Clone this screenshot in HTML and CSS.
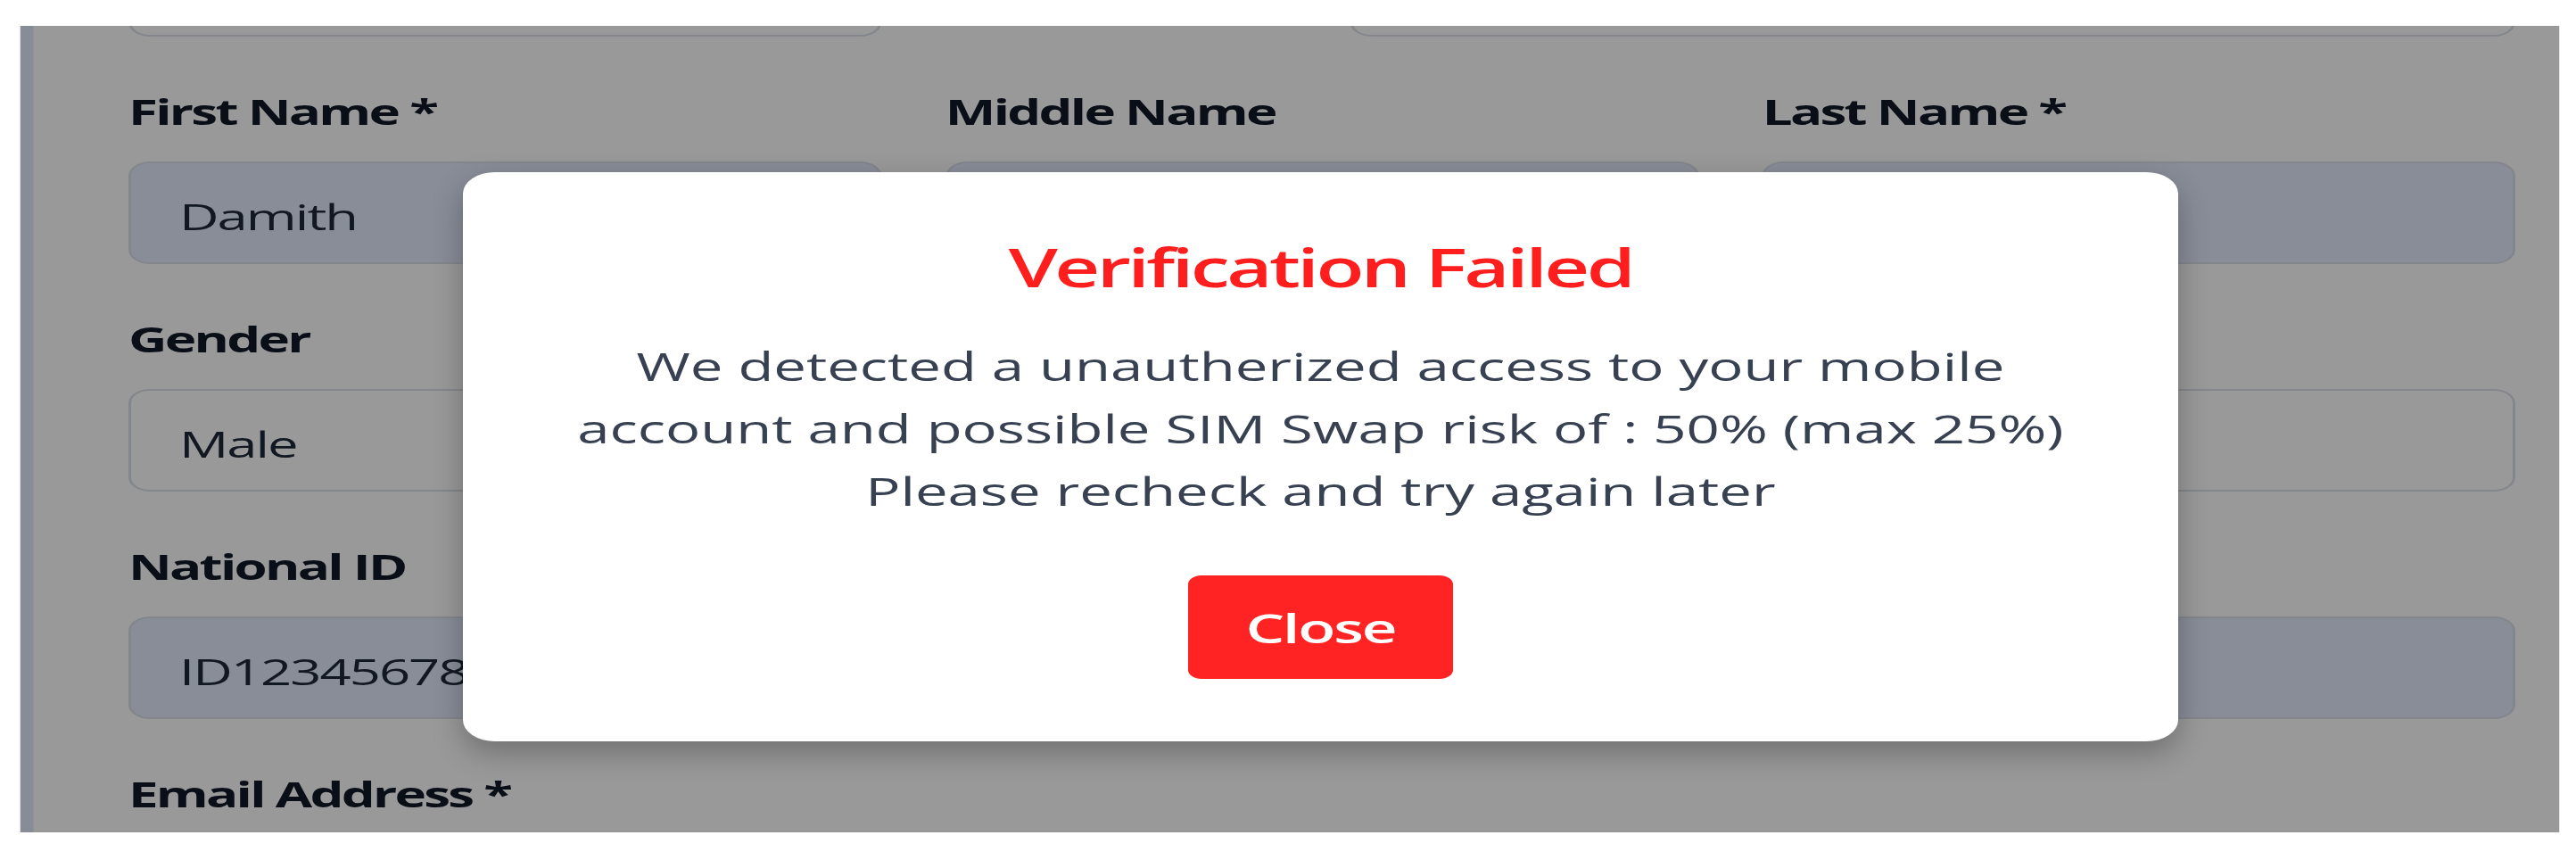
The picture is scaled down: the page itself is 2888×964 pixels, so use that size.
FILE: index.html
```html
<!DOCTYPE html>
<html lang="en">
<head>
<meta charset="utf-8">
<title>Verification Failed</title>
<link rel="stylesheet" href="styles.css">
</head>
<body>
<div class="stage">
  <div class="shot">
    <main class="page">
      <form class="form">
        <div class="field"><span class="label">&nbsp;</span><div class="input"></div></div>
        <div class="field field-wide"><span class="label">&nbsp;</span><div class="input"></div></div>

        <div class="field"><span class="label">First Name *</span><div class="input disabled">Damith</div></div>
        <div class="field"><span class="label">Middle Name</span><div class="input disabled"></div></div>
        <div class="field"><span class="label">Last Name *</span><div class="input disabled"></div></div>

        <div class="field"><span class="label">Gender</span><div class="input">Male</div></div>
        <div class="field"><span class="label">&nbsp;</span><div class="input"></div></div>
        <div class="field"><span class="label">&nbsp;</span><div class="input"></div></div>

        <div class="field"><span class="label">National ID</span><div class="input disabled">ID12345678</div></div>
        <div class="field"><span class="label">&nbsp;</span><div class="input disabled"></div></div>
        <div class="field"><span class="label">&nbsp;</span><div class="input disabled"></div></div>

        <div class="field"><span class="label">Email Address *</span><div class="input"></div></div>
      </form>
    </main>
    <div class="overlay">
      <div class="modal" role="dialog" aria-labelledby="modal-title">
        <h2 class="modal-title" id="modal-title">Verification Failed</h2>
        <p class="modal-text">We detected a unautherized access to your mobile<br>account and possible SIM Swap risk of : 50% (max 25%)<br>Please recheck and try again later</p>
        <button class="btn-close" type="button">Close</button>
      </div>
    </div>
  </div>
</div>
</body>
</html>
```

FILE: styles.css
```css
* { box-sizing: border-box; }

html, body {
  margin: 0;
  padding: 0;
  background: #ffffff;
  overflow: hidden;
}

body {
  width: 2888px;
  height: 964px;
  font-family: "Open Sans", "Noto Sans", "DejaVu Sans", sans-serif;
}

.stage {
  width: 1925.33px;
  height: 964px;
  padding: 29px 0 0 14.67px;
  transform: scaleX(1.5);
  transform-origin: 0 0;
}

.shot {
  position: relative;
  width: 1898px;
  height: 904px;
  overflow: hidden;
  background: #ffffff;
}

.page {
  display: flow-root;
  height: 100%;
  border-left: 10px solid #e3e9fb;
  padding: 0 32.2px 0 71.3px;
}

.form {
  display: grid;
  grid-template-columns: repeat(3, 563.3px);
  column-gap: 47.3px;
  row-gap: 59.5px;
  margin-top: -183.5px;
}

.field-wide {
  grid-column: span 2;
  padding-left: 302.7px;
}

.label {
  display: block;
  height: 48px;
  margin-bottom: 32.5px;
  font-size: 40px;
  line-height: 48px;
  font-weight: 700;
  letter-spacing: -1.8px;
  color: #111827;
  white-space: nowrap;
}

.input {
  display: flex;
  align-items: center;
  height: 115px;
  padding: 6px 0 0 36px;
  border: 2px solid #dbe1ea;
  border-radius: 16px;
  background: #ffffff;
  font-size: 41px;
  letter-spacing: -1.3px;
  color: #1f2937;
  white-space: nowrap;
}

.input.disabled {
  background: #e5ebfd;
}

.overlay {
  position: absolute;
  inset: 0;
  display: flex;
  align-items: center;
  justify-content: center;
  padding: 62px 0 0 46.6px;
  background: rgba(0, 0, 0, 0.4);
}

.modal {
  display: flex;
  flex-direction: column;
  align-items: center;
  width: 1282px;
  height: 638px;
  padding: 70.7px 40px 69px;
  border-radius: 24px;
  background: #ffffff;
  box-shadow: 0 12px 28px rgba(0, 0, 0, 0.28);
  text-align: center;
}

.modal-title {
  margin: 0;
  font-size: 59px;
  line-height: 70.8px;
  font-weight: 600;
  letter-spacing: -2.4px;
  color: #ff1e1e;
}

.modal-text {
  margin: 42px 0 0;
  font-size: 43.5px;
  line-height: 70px;
  color: #374151;
}

.btn-close {
  margin-top: 59px;
  width: 198.7px;
  height: 116px;
  border: 0;
  border-radius: 10px;
  background: #ff2323;
  color: #ffffff;
  font-family: "Open Sans", "Noto Sans", sans-serif;
  font-size: 46px;
  font-weight: 600;
  letter-spacing: -1.4px;
  line-height: 1;
}
```
